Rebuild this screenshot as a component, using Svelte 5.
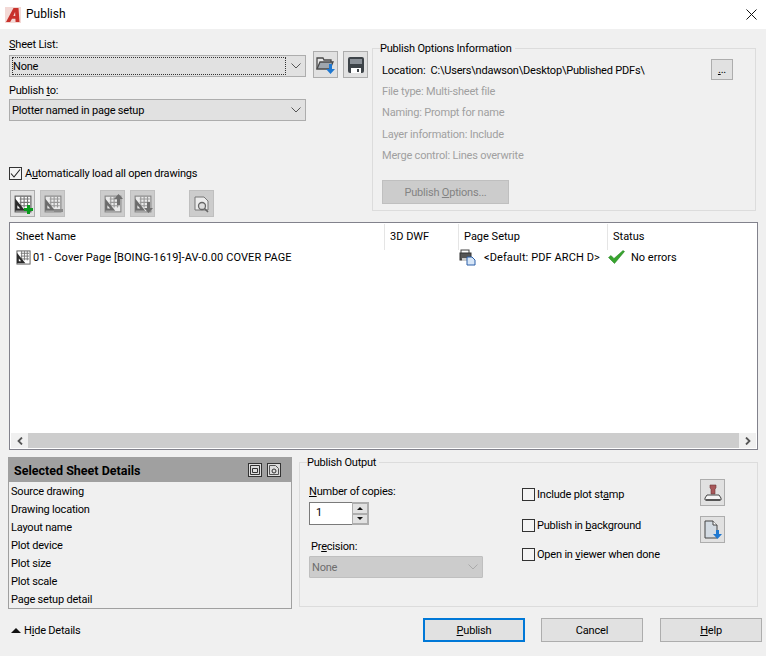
<script>
    const details = ['Source drawing', 'Drawing location', 'Layout name', 'Plot device', 'Plot size', 'Plot scale', 'Page setup detail'];
    const options = ['File type: Multi-sheet file', 'Naming: Prompt for name', 'Layer information: Include', 'Merge control: Lines overwrite'];
</script>

{#snippet grid(size, fade)}
    <svg width={size} height={size} viewBox="0 0 16 16" class:fade>
        <rect x="1" y="1" width="14" height="14" fill="#fff" stroke="#5a5a5a" />
        <path d="M5 3.5h9M5 6.5h9M5 9.5h9M6 1v10M9 1v10M12 1v10" stroke="#777" stroke-width="1" fill="none" />
        <path d="M1 3l9 11H1z" fill="#2b2b2b" />
        <path d="M3 9l2.5 3H3z" fill="#fff" />
    </svg>
{/snippet}

<div class="dialog">
    <header class="titlebar">
        <svg class="logo" width="16" height="16" viewBox="0 0 16 16">
            <rect width="16" height="16" fill="#f3d9d6" />
            <path d="M1 15L8.5 1H13.5L14.5 15H10.6L10.4 11.8H7L5.2 15z" fill="#c8312b" />
            <path d="M8.3 9h2l-.2-4z" fill="#f3d9d6" />
        </svg>
        <span class="title">Publish</span>
        <svg class="close" width="11" height="11" viewBox="0 0 11 11">
            <path d="M.5.5l10 10M10.5.5l-10 10" stroke="#111" stroke-width="1" fill="none" />
        </svg>
    </header>

    <section class="top">
        <div class="left">
            <div class="label"><u>S</u>heet List:</div>
            <div class="list-row">
                <div class="combo focused">
                    <span class="focus-box">None</span>
                    <svg class="chev" width="10" height="6" viewBox="0 0 10 6"><path d="M.5.5L5 5 9.500.5" stroke="#555" fill="none" /></svg>
                </div>
                <button class="icon-btn first">
                    <svg width="20" height="20" viewBox="0 0 20 20">
                        <path d="M1 14V3h6l1 2h7v2" fill="#e8e8e8" stroke="#4a4a4a" stroke-width="1.300" />
                        <path d="M1 14l3-7h13l-3 7z" fill="#9fa6ad" stroke="#4a4a4a" stroke-width="1.300" />
                        <path d="M13 9h3v5h3l-4.500 5L10 14h3z" fill="#1f78d1" />
                    </svg>
                </button>
                <button class="icon-btn">
                    <svg width="18" height="18" viewBox="0 0 18 18">
                        <path d="M1 3a2 2 0 0 1 2-2h12a2 2 0 0 1 2 2v12a2 2 0 0 1-2 2H3a2 2 0 0 1-2-2z" fill="#3d4348" />
                        <rect x="3" y="3" width="12" height="5" fill="#8a9097" />
                        <rect x="4" y="12" width="10" height="5" fill="#fff" />
                        <rect x="10" y="13" width="2" height="3" fill="#3d4348" />
                    </svg>
                </button>
            </div>
            <div class="label to">Publish <u>t</u>o:</div>
            <div class="combo">
                <span>Plotter named in page setup</span>
                <svg class="chev" width="10" height="6" viewBox="0 0 10 6"><path d="M.5.5L5 5 9.500.5" stroke="#555" fill="none" /></svg>
            </div>
            <label class="check auto">
                <span class="box">
                    <svg width="11" height="11" viewBox="0 0 11 11"><path d="M1 5.500L4 9 10 1.500" stroke="#222" stroke-width="1.100" fill="none" /></svg>
                </span>
                <span>A<u>u</u>tomatically load all open drawings</span>
            </label>
            <div class="toolbar">
                <button class="tool">
                    {@render grid(18, false)}
                    <svg class="plus" width="9" height="9" viewBox="0 0 9 9"><path d="M3 0h3v3h3v3H6v3H3V6H0V3h3z" fill="#0a9a1e" /></svg>
                </button>
                <button class="tool off">
                    {@render grid(18, true)}
                    <svg class="minus" width="9" height="3" viewBox="0 0 9 3"><rect width="9" height="3" fill="#8a8a8a" /></svg>
                </button>
                <button class="tool off gap-a">
                    {@render grid(18, true)}
                    <svg class="arrow" width="9" height="11" viewBox="0 0 9 11"><path d="M3 11V5H0l4.500-5L9 5H6v6z" fill="#6e6e6e" /></svg>
                </button>
                <button class="tool off">
                    {@render grid(18, true)}
                    <svg class="arrow low" width="9" height="11" viewBox="0 0 9 11"><path d="M3 0v6H0l4.500 5L9 6H6V0z" fill="#6e6e6e" /></svg>
                </button>
                <button class="tool off gap-b">
                    <svg width="18" height="18" viewBox="0 0 18 18">
                        <path d="M2 2h9l4 4v9H2z" fill="#ececec" stroke="#777" />
                        <circle cx="9" cy="11" r="3.500" fill="#ddd" stroke="#666" stroke-width="1.300" />
                        <path d="M11.500 13.500L15 17" stroke="#666" stroke-width="1.600" />
                    </svg>
                </button>
            </div>
        </div>

        <fieldset class="group options">
            <legend>Publish Options Information</legend>
            <div class="location">
                <span>Location:&nbsp; C:\Users\ndawson\Desktop\Published PDFs\</span>
                <button class="browse"><u>.</u>..</button>
            </div>
            {#each options as line}
                <div class="opt-line">{line}</div>
            {/each}
            <button class="opt-btn">Publish <u>O</u>ptions...</button>
        </fieldset>
    </section>

    <section class="table">
        <div class="thead">
            <div class="c1">Sheet Name</div>
            <div class="c2">3D DWF</div>
            <div class="c3">Page Setup</div>
            <div class="c4">Status</div>
        </div>
        <div class="row">
            <div class="c1 name">
                {@render grid(15, false)}
                <span>01 - Cover Page [BOING-1619]-AV-0.00 COVER PAGE</span>
            </div>
            <div class="c2"></div>
            <div class="c3 setup">
                <svg width="17" height="17" viewBox="0 0 17 17">
                    <rect x="2" y="1" width="8" height="4" fill="#fff" stroke="#444" />
                    <rect x="1" y="4" width="11" height="7" fill="#555" stroke="#333" />
                    <rect x="3" y="9" width="7" height="3" fill="#ccc" />
                    <path d="M8 8h5l3 3v5H8z" fill="#d7e6f7" stroke="#2a5fa8" />
                </svg>
                <span>&lt;Default: PDF ARCH D&gt;</span>
            </div>
            <div class="c4 status">
                <svg width="17" height="14" viewBox="0 0 17 14"><path d="M0.500 7.500L3 5.500 6 8.500 15 0.500 16.500 1.500 6.500 13.500z" fill="#37a52e" stroke="#1f7a1a" stroke-width=".5" /></svg>
                <span>No errors</span>
            </div>
        </div>
        <div class="hscroll">
            <span class="arr"><svg width="8" height="8" viewBox="0 0 8 8"><path d="M6 .5L2.500 4 6 7.500" stroke="#555" stroke-width="1.800" fill="none" /></svg></span>
            <div class="thumb"></div>
            <span class="arr"><svg width="8" height="8" viewBox="0 0 8 8"><path d="M2 .5L5.500 4 2 7.500" stroke="#555" stroke-width="1.800" fill="none" /></svg></span>
        </div>
    </section>

    <section class="lower">
        <div class="details">
            <div class="details-head">
                <span>Selected Sheet Details</span>
                <span class="head-icon">
                    <svg width="10" height="10" viewBox="0 0 10 10"><path d="M0.500 0.500h9M0.500 0.500v9h9V0.500M2.500 3.500h5v4h-5z" stroke="#333" fill="none" /></svg>
                </span>
                <span class="head-icon">
                    <svg width="10" height="10" viewBox="0 0 10 10"><path d="M0.500 0.500h6l3 3v6h-9z" stroke="#555" fill="none" /><circle cx="5" cy="6" r="2" stroke="#333" fill="none" /></svg>
                </span>
            </div>
            {#each details as d}
                <div class="detail">{d}</div>
            {/each}
        </div>

        <fieldset class="group output">
            <legend>Publish Output</legend>
            <div class="out-cols">
                <div class="out-left">
                    <div class="label"><u>N</u>umber of copies:</div>
                    <div class="spin">
                        <span class="spin-val">1</span>
                        <span class="spin-btns">
                            <span class="spin-btn"><i class="up"></i></span>
                            <span class="spin-btn"><i class="down"></i></span>
                        </span>
                    </div>
                    <div class="label prec">Pr<u>e</u>cision:</div>
                    <div class="combo disabled">
                        <span>None</span>
                        <svg class="chev" width="10" height="6" viewBox="0 0 10 6"><path d="M.5.5L5 5 9.500.5" stroke="#aaa" fill="none" /></svg>
                    </div>
                </div>
                <div class="out-right">
                    <div class="out-opts">
                        <label class="check stamp"><span class="box"></span><span>Include plot st<u>a</u>mp</span></label>
                        <label class="check bg"><span class="box"></span><span>Publish in <u>b</u>ackground</span></label>
                        <label class="check viewer"><span class="box"></span><span>Open in <u>v</u>iewer when done</span></label>
                    </div>
                    <div class="out-btns">
                        <button class="tool">
                            <svg width="18" height="18" viewBox="0 0 18 18">
                                <path d="M6 1h6v3l-1 1v5H7V5L6 4z" fill="#a8585a" stroke="#6d3537" stroke-width=".6" />
                                <path d="M3 11h12l2 3v2H1v-2z" fill="#f4f4f4" stroke="#444" />
                                <rect x="2" y="15" width="14" height="2" fill="#555" />
                            </svg>
                        </button>
                        <button class="tool">
                            <svg width="18" height="20" viewBox="0 0 18 20">
                                <path d="M1 1h8l4 4v13H1z" fill="#d3dbe3" stroke="#444" />
                                <path d="M9 1v4h4" fill="#fff" stroke="#444" />
                                <path d="M12 10h3v4h3l-4.500 5L9 14h3z" fill="#1f78d1" />
                            </svg>
                        </button>
                    </div>
                </div>
            </div>
        </fieldset>
    </section>

    <footer class="foot">
        <div class="hide">
            <i class="tri"></i>
            <span>H<u>i</u>de Details</span>
        </div>
        <button class="btn primary"><u>P</u>ublish</button>
        <button class="btn cancel">Cancel</button>
        <button class="btn help"><u>H</u>elp</button>
    </footer>
</div>

<style>
    :global(body) {
        margin: 0;
        background: #f0f0f0;
    }
    .dialog {
        width: 766px;
        height: 656px;
        overflow: hidden;
        background: #f0f0f0;
        color: #000;
        font-family: Roboto, "Noto Sans", sans-serif;
        font-size: 11px;
        letter-spacing: -0.2px;
        line-height: 15px;
    }
    button {
        font: inherit;
        letter-spacing: inherit;
        color: inherit;
        padding: 0;
        margin: 0;
    }
    u {
        text-underline-offset: 1px;
    }
    .titlebar {
        height: 29px;
        background: #fff;
        display: flex;
        align-items: center;
        font-size: 12px;
        letter-spacing: 0;
    }
    .logo {
        margin-left: 5px;
    }
    .title {
        margin-left: 5px;
    }
    .close {
        margin-left: auto;
        margin-right: 9px;
    }

    .top {
        height: 193px;
        display: flex;
    }
    .left {
        width: 363px;
        flex: none;
        padding: 8px 0 0 9px;
        box-sizing: border-box;
    }
    .list-row {
        display: flex;
        align-items: flex-start;
        margin-top: -1px;
    }
    .list-row .combo {
        margin-top: 4px;
    }
    .label.to {
        margin: 5px 0 1px;
    }
    .combo {
        width: 297px;
        height: 22px;
        box-sizing: border-box;
        flex: none;
        background: #e1e1e1;
        border: 1px solid #adadad;
        display: flex;
        align-items: center;
        justify-content: space-between;
        padding: 0 4px 0 2px;
    }
    .focus-box {
        flex: 1;
        height: 18px;
        line-height: 17px;
        border: 1px dotted #333;
        box-sizing: border-box;
        margin-right: 5px;
    }
    .icon-btn {
        width: 25px;
        height: 27px;
        flex: none;
        margin-left: 5px;
        background: #e1e1e1;
        border: 1px solid #adadad;
        display: flex;
        align-items: center;
        justify-content: center;
    }
    .icon-btn.first {
        margin-left: 7px;
    }
    .check {
        display: flex;
        align-items: center;
        gap: 2px;
    }
    .box {
        width: 13px;
        height: 13px;
        box-sizing: border-box;
        border: 1px solid #333;
        background: #f4f4f4;
        display: flex;
        align-items: center;
        justify-content: center;
        flex: none;
    }
    .check.auto {
        margin-top: 45px;
        gap: 3px;
    }
    .toolbar {
        display: flex;
        margin: 9px 0 0 1px;
    }
    .tool {
        width: 25px;
        height: 27px;
        flex: none;
        box-sizing: border-box;
        background: #e1e1e1;
        border: 1px solid #adadad;
        display: flex;
        align-items: center;
        justify-content: center;
        position: relative;
    }
    .tool + .tool {
        margin-left: 5px;
    }
    .tool.off {
        background: #cccccc;
        border-color: #bfbfbf;
    }
    .tool.gap-a {
        margin-left: 35px;
    }
    .tool.gap-b {
        margin-left: 34px;
    }
    .fade {
        opacity: 0.6;
    }
    .plus {
        position: absolute;
        right: 1px;
        bottom: 2px;
    }
    .minus {
        position: absolute;
        right: 1px;
        bottom: 4px;
    }
    .arrow {
        position: absolute;
        right: 1px;
        top: 3px;
    }
    .arrow.low {
        top: auto;
        bottom: 3px;
    }

    .group {
        margin: 0;
        padding: 0;
        border: 1px solid #dcdcdc;
        box-sizing: border-box;
        min-width: 0;
    }
    legend {
        padding: 0 3px 0 0;
        margin-left: 7px;
        background: #f0f0f0;
    }
    .options {
        width: 384px;
        margin: 12px 0 0 9px;
        height: 170px;
        padding: 0 9px;
    }
    .options legend {
        margin-left: -2px;
    }
    .location {
        display: flex;
        justify-content: space-between;
        align-items: flex-start;
        height: 18px;
        padding-top: 7px;
        line-height: 15px;
        color: #000;
    }
    .browse {
        width: 22px;
        height: 21px;
        margin-top: -4px;
        margin-right: 13px;
        background: #e1e1e1;
        border: 1px solid #adadad;
        line-height: 15px;
    }
    .opt-line {
        height: 21.300px;
        line-height: 21px;
        color: #a0a0a0;
    }
    .opt-btn {
        display: block;
        width: 127px;
        height: 24px;
        margin-top: 14px;
        background: #cccccc;
        border: 1px solid #bfbfbf;
        color: #838383;
    }

    .table {
        margin: 0 8px 0 9px;
        height: 228px;
        box-sizing: border-box;
        border: 1px solid #82828c;
        background: #fff;
        display: flex;
        flex-direction: column;
        padding: 1px;
        letter-spacing: 0;
    }
    .thead, .row {
        display: grid;
        grid-template-columns: 373px 74px 149px 1fr;
    }
    .thead {
        height: 24px;
    }
    .thead > div {
        line-height: 26px;
        padding-left: 5px;
        border-left: 1px solid #e5e5e5;
    }
    .thead > .c1 {
        border-left: 0;
    }
    .row {
        height: 184px;
        align-content: start;
    }
    .row > div {
        height: 18px;
        display: flex;
        align-items: center;
    }
    .name {
        padding-left: 5px;
        gap: 2px;
        white-space: nowrap;
        letter-spacing: 0.100px;
    }
    .setup {
        padding-left: 1px;
        gap: 8px;
        letter-spacing: 0.100px;
    }
    .status {
        gap: 6px;
        padding-left: 1px;
    }
    .hscroll {
        height: 15px;
        margin-top: auto;
        display: flex;
        background: #fff;
    }
    .arr {
        width: 17px;
        display: flex;
        align-items: center;
        justify-content: center;
        background: #f0f0f0;
    }
    .thumb {
        flex: 1;
        background: #cdcdcd;
    }

    .lower {
        display: flex;
        padding-left: 8px;
        margin-top: 7px;
    }
    .details {
        width: 284px;
        height: 152px;
        box-sizing: border-box;
        border: 1px solid #a0a0a0;
        flex: none;
    }
    .details-head {
        height: 25px;
        box-sizing: border-box;
        margin: -1px -1px 0;
        background: #a0a0a0;
        display: flex;
        align-items: center;
        padding: 1px 11px 0 6px;
        font-weight: 700;
        gap: 5px;
        font-size: 12.500px;
        letter-spacing: 0;
    }
    .details-head span:first-child {
        flex: 1;
    }
    .head-icon {
        width: 14px;
        height: 14px;
        box-sizing: border-box;
        border: 1px solid #333;
        background: #ddd;
        display: flex;
        align-items: center;
        justify-content: center;
    }
    .detail {
        height: 18px;
        line-height: 20px;
        padding-left: 2px;
    }
    .output {
        width: 459px;
        height: 152px;
        margin: -2px 0 0 7px;
    }
    .output legend {
        margin-left: 7px;
    }
    .out-cols {
        display: flex;
        padding-left: 9px;
    }
    .out-left {
        width: 213px;
        padding-top: 14px;
        flex: none;
    }
    .spin {
        width: 60px;
        height: 23px;
        margin-top: 3px;
        box-sizing: border-box;
        border: 1px solid #adadad;
        display: flex;
        background: #fff;
        position: relative;
    }
    .spin-val {
        flex: 1;
        padding-left: 6px;
        line-height: 20px;
        border: 1px solid #7a7a7a;
        border-right: 0;
        margin: -1px 0 -1px -1px;
    }
    .spin-btns {
        width: 16px;
        display: flex;
        flex-direction: column;
        background: #f0f0f0;
    }
    .spin-btn {
        flex: 1;
        border: 1px solid #adadad;
        background: #e1e1e1;
        display: flex;
        align-items: center;
        justify-content: center;
    }
    .up, .down {
        width: 0;
        height: 0;
        border-left: 3px solid transparent;
        border-right: 3px solid transparent;
    }
    .up {
        border-bottom: 3px solid #111;
    }
    .down {
        border-top: 3px solid #111;
    }
    .label.prec {
        margin: 14px 0 2px 2px;
    }
    .combo.disabled {
        width: 174px;
        background: #cccccc;
        border-color: #bfbfbf;
        color: #6d6d6d;
        border-radius: 1px;
    }
    .out-right {
        flex: 1;
        display: flex;
    }
    .out-opts {
        width: 178px;
        padding-top: 17px;
        flex: none;
    }
    .check.bg {
        margin-top: 16px;
    }
    .check.viewer {
        margin-top: 14px;
    }
    .out-btns {
        padding-top: 9px;
        display: flex;
        flex-direction: column;
        gap: 10px;
    }
    .out-btns .tool + .tool {
        margin-left: 0;
    }

    .foot {
        display: flex;
        align-items: flex-start;
        margin-top: 9px;
    }
    .hide {
        margin-left: 11px;
        height: 24px;
        display: flex;
        align-items: center;
        gap: 3px;
        width: 412px;
        flex: none;
    }
    .tri {
        width: 0;
        height: 0;
        border-left: 5px solid transparent;
        border-right: 5px solid transparent;
        border-bottom: 5px solid #111;
    }
    .btn {
        width: 102px;
        height: 24px;
        flex: none;
        box-sizing: border-box;
        background: #e1e1e1;
        border: 1px solid #adadad;
    }
    .btn.primary {
        border: 2px solid #0078d7;
    }
    .btn.cancel {
        margin-left: 16px;
    }
    .btn.help {
        margin-left: 17px;
    }
</style>
